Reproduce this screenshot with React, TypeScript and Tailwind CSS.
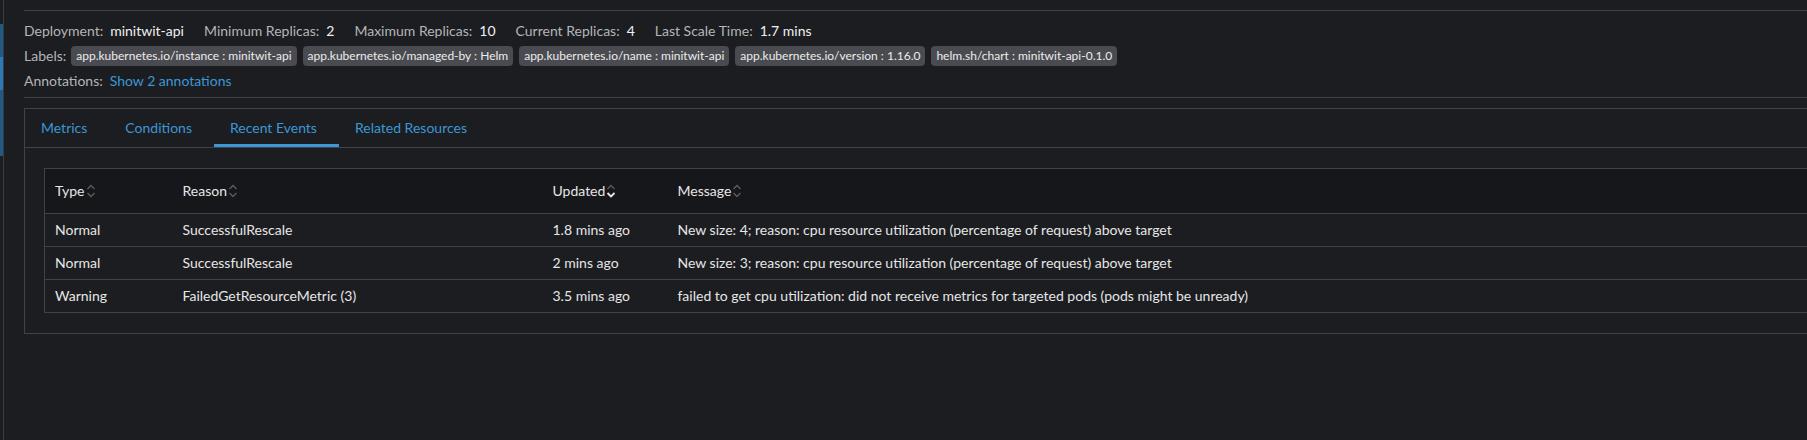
import { useState } from 'react'

const labels = [
  'app.kubernetes.io/instance : minitwit-api',
  'app.kubernetes.io/managed-by : Helm',
  'app.kubernetes.io/name : minitwit-api',
  'app.kubernetes.io/version : 1.16.0',
  'helm.sh/chart : minitwit-api-0.1.0',
]

const stats = [
  { label: 'Deployment:', value: 'minitwit-api' },
  { label: 'Minimum Replicas:', value: '2' },
  { label: 'Maximum Replicas:', value: '10' },
  { label: 'Current Replicas:', value: '4' },
  { label: 'Last Scale Time:', value: '1.7 mins' },
]

const events = [
  { type: 'Normal', reason: 'SuccessfulRescale', updated: '1.8 mins ago', message: 'New size: 4; reason: cpu resource utilization (percentage of request) above target' },
  { type: 'Normal', reason: 'SuccessfulRescale', updated: '2 mins ago', message: 'New size: 3; reason: cpu resource utilization (percentage of request) above target' },
  { type: 'Warning', reason: 'FailedGetResourceMetric (3)', updated: '3.5 mins ago', message: 'failed to get cpu utilization: did not receive metrics for targeted pods (pods might be unready)' },
]

const tabs = ['Metrics', 'Conditions', 'Recent Events', 'Related Resources']

function SortIcon({ desc }: { desc?: boolean }) {
  return (
    <svg width="10" height="14" viewBox="0 0 10 14" className="ml-px shrink-0" fill="none" strokeWidth="1.3">
      <polyline points="1.5,5 5,1.5 8.5,5" stroke="#5c5d63" />
      <polyline points="1.5,9 5,12.5 8.5,9" stroke={desc ? '#e8e8e8' : '#5c5d63'} strokeWidth={desc ? 1.8 : 1.3} />
    </svg>
  )
}

export default function App() {
  const [tab, setTab] = useState('Recent Events')

  return (
    <div className="flex h-[440px] w-full overflow-hidden bg-[#1c1d21] text-sm text-[#e6e6e6]" style={{ fontFamily: 'Lato, "Open Sans", sans-serif' }}>
      {/* sidebar edge */}
      <div className="flex w-[3px] shrink-0 flex-col">
        <div className="h-6" />
        <div className="h-[33px] bg-[#1f5a85]" />
        <div className="h-[33px] bg-[#2b7ab6]" />
        <div className="h-[66px] bg-[#1f5a85]" />
      </div>
      <div className="w-px shrink-0 bg-[#3a3b40]" />

      <div className="min-w-0 flex-1 pl-5 pt-[10px]">
        <div className="-mr-4 border-y border-[#414247] pb-[4px] pt-[7px]">
          <div className="flex h-[25px] items-center">
            {stats.map(s => (
              <div key={s.label} className="mr-5 flex items-center">
                <span className="text-[#b4b5b8]">{s.label}</span>
                <span className="ml-[7px] text-[#f0f0f0]">{s.value}</span>
              </div>
            ))}
          </div>
          <div className="flex h-[25px] items-center">
            <span className="mr-[5px] text-[#b4b5b8]">Labels:</span>
            <div className="flex gap-[6px]">
              {labels.map(l => (
                <span key={l} className="rounded-[4px] bg-[#4a4b50] px-[5px] py-[2px] text-xs leading-[16px] text-[#ececec]">{l}</span>
              ))}
            </div>
          </div>
          <div className="flex h-[25px] items-center">
            <span className="text-[#b4b5b8]">Annotations:</span>
            <span className="ml-[7px] cursor-pointer text-[#3b97d6]">Show 2 annotations</span>
          </div>
        </div>

        <div className="-mr-4 mt-[10px] border-y border-l border-[#414247]">
          <div className="flex h-[39px] border-b border-[#414247]">
            {tabs.map(t => (
              <button
                key={t}
                onClick={() => setTab(t)}
                className={`flex h-full items-center border-b-[3px] pl-4 pr-[22px] pt-[3px] text-[#3b97d6] ${t === tab ? 'border-[#3b97d6]' : 'border-transparent'}`}
              >
                {t}
              </button>
            ))}
          </div>

          <div className="py-5 pl-[19px]">
            <table className="w-full border-collapse border-y border-l border-[#414247] text-left">
              <thead>
                <tr className="h-[45px] bg-[#16171b]">
                  <th className="w-[128px] px-[10px] font-normal">
                    <span className="flex items-center">Type<SortIcon /></span>
                  </th>
                  <th className="w-[370px] px-[10px] font-normal">
                    <span className="flex items-center">Reason<SortIcon /></span>
                  </th>
                  <th className="w-[125px] px-[10px] font-normal">
                    <span className="flex items-center">Updated<SortIcon desc /></span>
                  </th>
                  <th className="px-[10px] font-normal">
                    <span className="flex items-center">Message<SortIcon /></span>
                  </th>
                </tr>
              </thead>
              <tbody>
                {events.map((e, i) => (
                  <tr key={i} className="h-[33px] border-t border-[#414247]">
                    <td className="px-[10px]">{e.type}</td>
                    <td className="px-[10px]">{e.reason}</td>
                    <td className="px-[10px]">{e.updated}</td>
                    <td className="px-[10px]">{e.message}</td>
                  </tr>
                ))}
              </tbody>
            </table>
          </div>
        </div>
      </div>
    </div>
  )
}
